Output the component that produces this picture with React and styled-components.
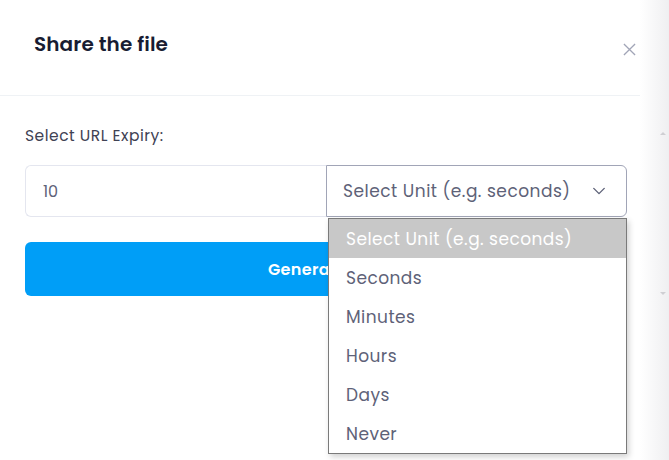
import React from 'react';
import styled, { createGlobalStyle } from 'styled-components';

const GlobalStyle = createGlobalStyle`
	html, body { margin: 0; padding: 0; background: #fff; }
	body { font-family: Poppins, Inter, "Noto Sans", sans-serif; }
	* { box-sizing: border-box; }
`;

const Page = styled.div`
	display: flex;
	width: 669px;
	height: 460px;
	overflow: hidden;
`;

const Modal = styled.div`
	width: 640px;
	display: flex;
	flex-direction: column;
	background: #fff;
`;

const Header = styled.div`
	height: 96px;
	padding: 0 4px 0 34px;
	display: flex;
	align-items: center;
	justify-content: space-between;
	border-bottom: 1px solid #eff2f5;
`;

const Title = styled.h3`
	margin: 0 0 8px;
	font-size: 20px;
	font-weight: 600;
	letter-spacing: 0.1px;
	color: #181c32;
`;

const Close = styled.button`
	border: 0;
	background: none;
	padding: 0;
	margin-top: 4px;
	display: flex;
	color: #a1a5b7;
`;

const Body = styled.div`
	padding: 30px 13px 0 25px;
`;

const Label = styled.label`
	display: block;
	font-size: 15.5px;
	font-weight: 400;
	letter-spacing: 0.5px;
	color: #3f4254;
	line-height: 20px;
`;

const Group = styled.div`
	margin-top: 19px;
	display: flex;
	height: 52px;
`;

const Input = styled.div`
	width: 301px;
	display: flex;
	align-items: center;
	padding-left: 17px;
	border: 1px solid #e4e6ef;
	border-right: 0;
	border-radius: 6px 0 0 6px;
	font-size: 16px;
	color: #5e6278;
`;

const SelectWrap = styled.div`
	position: relative;
	flex: 1;
`;

const SelectBox = styled.div`
	height: 100%;
	display: flex;
	align-items: center;
	justify-content: space-between;
	padding: 0 20px 0 16px;
	border: 1px solid #a1a5b7;
	border-radius: 0 6px 6px 0;
	font-size: 17px;
	letter-spacing: 0.5px;
	color: #5e6278;
`;

const Options = styled.ul`
	position: absolute;
	top: calc(100% + 1px);
	left: 2px;
	right: 0;
	margin: 0;
	padding: 0;
	list-style: none;
	background: #fff;
	border: 1px solid #7a7a7a;
	box-shadow: 2px 3px 6px rgba(0, 0, 0, 0.18);
	z-index: 2;
`;

const Option = styled.li`
	height: 39px;
	display: flex;
	align-items: center;
	padding-left: 17px;
	font-size: 17px;
	letter-spacing: 0.45px;
	color: ${p => (p.active ? '#fff' : '#5e6278')};
	background: ${p => (p.active ? '#c8c8c8' : '#fff')};
`;

const Button = styled.button`
	margin-top: 25px;
	width: 100%;
	height: 54px;
	border: 0;
	border-radius: 6px;
	background: #009ef7;
	color: #fff;
	font-family: inherit;
	font-size: 16px;
	font-weight: 600;
	letter-spacing: 0.35px;
`;

const Side = styled.div`
	flex: 1;
	background: linear-gradient(to right, #fff, #efeff1);
	display: flex;
	flex-direction: column;
	align-items: flex-end;
	padding: 132px 3px 0 0;
	gap: 157px;
`;

const Arrow = styled.span`
	width: 0;
	height: 0;
	border-left: 3px solid transparent;
	border-right: 3px solid transparent;
	${p => (p.down ? 'border-top: 3px solid #cfcfd3;' : 'border-bottom: 3px solid #cfcfd3;')}
`;

const units = ['Seconds', 'Minutes', 'Hours', 'Days', 'Never'];

export default function App() {
	return (
		<Page>
			<GlobalStyle />
			<Modal>
				<Header>
					<Title>Share the file</Title>
					<Close aria-label="Close">
						<svg width="13" height="13" viewBox="0 0 14 14" fill="none" stroke="currentColor" strokeWidth="1.4">
							<path d="M1 1l12 12M13 1L1 13" />
						</svg>
					</Close>
				</Header>
				<Body>
					<Label>Select URL Expiry:</Label>
					<Group>
						<Input>10</Input>
						<SelectWrap>
							<SelectBox>
								<span>Select Unit (e.g. seconds)</span>
								<svg width="14" height="14" viewBox="0 0 16 16" fill="none" stroke="#5e6278" strokeWidth="1.6" strokeLinecap="round" strokeLinejoin="round">
									<path d="M2 5l6 6 6-6" />
								</svg>
							</SelectBox>
							<Options>
								<Option active>Select Unit (e.g. seconds)</Option>
								{units.map(u => <Option key={u}>{u}</Option>)}
							</Options>
						</SelectWrap>
					</Group>
					<Button>Generate Link</Button>
				</Body>
			</Modal>
			<Side>
				<Arrow />
				<Arrow down />
			</Side>
		</Page>
	);
}
